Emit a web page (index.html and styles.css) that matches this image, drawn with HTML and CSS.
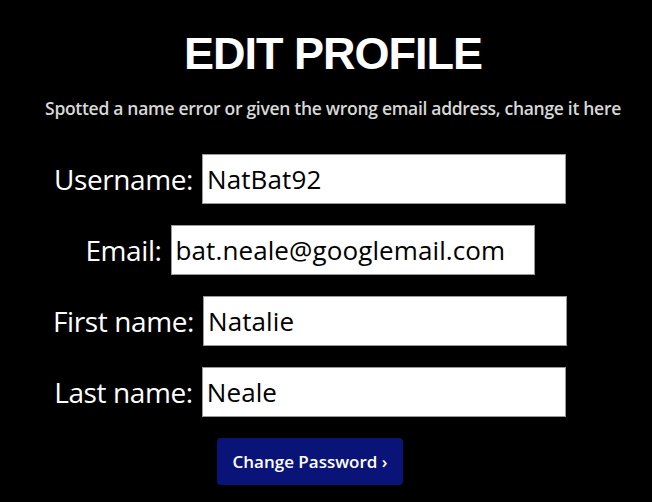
FILE: index.html
```html
<!DOCTYPE html>
<html lang="en">
<head>
<meta charset="utf-8">
<title>Edit Profile</title>
<link rel="stylesheet" href="styles.css">
</head>
<body>
<main class="page">
  <header class="intro">
    <h1 class="title">EDIT PROFILE</h1>
    <p class="subtitle">Spotted a name error or given the wrong email address, change it here</p>
  </header>
  <form class="form">
    <div class="row">
      <label class="label" for="username">Username:</label>
      <input class="field" id="username" type="text" value="NatBat92">
    </div>
    <div class="row">
      <label class="label" for="email">Email:</label>
      <input class="field" id="email" type="text" value="bat.neale@googlemail.com">
    </div>
    <div class="row">
      <label class="label" for="first">First name:</label>
      <input class="field" id="first" type="text" value="Natalie">
    </div>
    <div class="row">
      <label class="label" for="last">Last name:</label>
      <input class="field" id="last" type="text" value="Neale">
    </div>
    <div class="row row-button">
      <button class="btn" type="button">Change Password ›</button>
    </div>
  </form>
</main>
</body>
</html>
```
FILE: styles.css
```css
html, body {
  margin: 0;
  padding: 0;
  background: #000;
}
body {
  font-family: "Open Sans", "Liberation Sans", sans-serif;
  color: #fff;
}
.page {
  padding-top: 26px;
}
.intro {
  text-align: center;
  padding-left: 14px;
}
.title {
  margin: 0;
  font-family: "Liberation Sans", sans-serif;
  font-weight: bold;
  font-size: 45px;
  line-height: 56px;
  letter-spacing: -1px;
  color: #fff;
}
.subtitle {
  margin: 14px 0 0;
  font-size: 17.5px;
  font-weight: 600;
  line-height: 24px;
  color: #d8d8d8;
  letter-spacing: -0.3px;
}
.form {
  margin-top: 34px;
  display: flex;
  flex-direction: column;
  gap: 21px;
  padding-right: 32px;
}
.row {
  display: flex;
  justify-content: center;
  align-items: center;
  gap: 9px;
}
.label {
  font-size: 28px;
  color: #fff;
  letter-spacing: -0.4px;
}
.field {
  box-sizing: border-box;
  width: 364px;
  height: 50px;
  margin: 0;
  padding: 0 4px;
  border: 1px solid #9a9a9a;
  background: #fff;
  color: #000;
  font-family: "Open Sans", "Liberation Sans", sans-serif;
  font-size: 26px;
  letter-spacing: 0.1px;
  outline: none;
}
.btn {
  width: 186px;
  height: 47px;
  border: none;
  border-radius: 4px;
  background: #0a1478;
  color: #fff;
  font-family: "Open Sans", "Liberation Sans", sans-serif;
  font-size: 17px;
  font-weight: 600;
  padding: 0;
}
```
